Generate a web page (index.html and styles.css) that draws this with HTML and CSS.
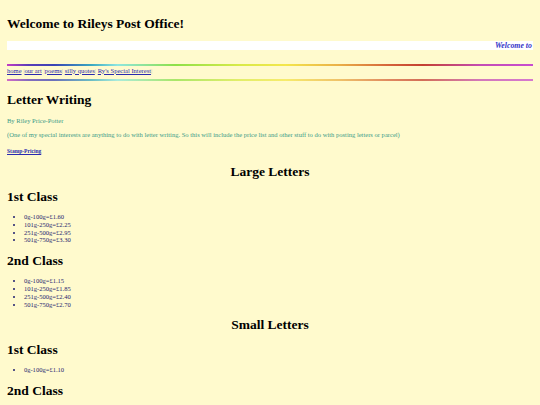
FILE: index.html
```html
<!DOCTYPE html>
<html lang="en">
<head>
  <meta charset="UTF-8">
  <meta name="viewport" content="width=device-width, initial-scale=1.0">
  <title>Rileys Post Office - Letter Writing</title>
  <link rel="stylesheet" href="styles.css">
</head>
<body>
  <h1>Welcome to Rileys Post Office!</h1>
  <div class="ticker">
    <span class="ticker-text">Welcome to Rileys Post Office!</span>
  </div>

  <hr class="rainbow">
  <p class="nav">
    <a href="#">home</a> <span class="sep">|</span><a href="#">our art</a> <span class="sep">|</span><a href="#">poems</a><span class="sep">|</span> <a href="#">silly quotes</a><span class="sep">|</span> <a href="#">Ry's Special Interest</a><span class="sep">|</span>
  </p>
  <hr class="rainbow faded">

  <h1>Letter Writing</h1>
  <p class="byline">By Riley Price-Potter</p>
  <p class="byline">(One of my special interests are anything to do with letter writing. So this will include the price list and other stuff to do with posting letters or parcel)</p>

  <h5><a href="#pricing">Stamp-Pricing</a></h5>

  <h1 class="centre" id="pricing">Large Letters</h1>
  <h1>1st Class</h1>
  <ul class="prices">
    <li>0g-100g=£1.60</li>
    <li>101g-250g=£2.25</li>
    <li>251g-500g=£2.95</li>
    <li>501g-750g=£3.30</li>
  </ul>
  <h1>2nd Class</h1>
  <ul class="prices">
    <li>0g-100g=£1.15</li>
    <li>101g-250g=£1.85</li>
    <li>251g-500g=£2.40</li>
    <li>501g-750g=£2.70</li>
  </ul>

  <h1 class="centre">Small Letters</h1>
  <h1>1st Class</h1>
  <ul class="prices">
    <li>0g-100g=£1.10</li>
  </ul>
  <h1>2nd Class</h1>
  <ul class="prices">
    <li>0g-100g=0.75p</li>
  </ul>
</body>
</html>
```

FILE: styles.css
```css
body {
  font-family: "Liberation Serif", "Times New Roman", serif;
  font-size: 6.55px;
  line-height: 7.7px;
  background-color: #fffacd;
  margin: 7px;
}

h1 {
  font-size: 13.5px;
  line-height: 15.5px;
  margin: 9px 0;
  color: #000;
}

.centre {
  text-align: center;
}

.ticker {
  background-color: #fff;
  height: 9px;
  line-height: 9px;
  overflow: hidden;
  white-space: nowrap;
  padding-left: 488px;
}

.ticker-text {
  font-size: 7.8px;
  font-weight: bold;
  font-style: italic;
  color: #3434c8;
}

hr.rainbow {
  height: 2px;
  border: none;
  margin: 14px 0 0 0;
  background: linear-gradient(to right,
    #c43cc4 0%,
    #5a3cb8 4%,
    #3a44b4 9%,
    #3aa8c0 16%,
    #8ee6e0 21%,
    #8ee048 32%,
    #d8ea48 44%,
    #f4e64c 53%,
    #eab048 63%,
    #d4603a 73%,
    #c44030 79%,
    #c44cb4 90%,
    #c84cd0 100%);
}

hr.faded {
  margin: 5px 0 11px 0;
  opacity: 0.75;
}

.nav {
  margin: 1px 0 0 0;
}

.nav a {
  color: #2a2ab0;
}

.sep {
  color: #b8b8b8;
}

.byline {
  color: #3a9a88;
  margin: 6.75px 0;
}

h5 {
  font-size: 5.5px;
  line-height: 6.5px;
  margin: 9.4px 0;
}

h5 a {
  color: #2a2ab0;
}

.prices {
  color: #1c1c6e;
  margin: 6.75px 0;
  padding-left: 16.9px;
}
```
